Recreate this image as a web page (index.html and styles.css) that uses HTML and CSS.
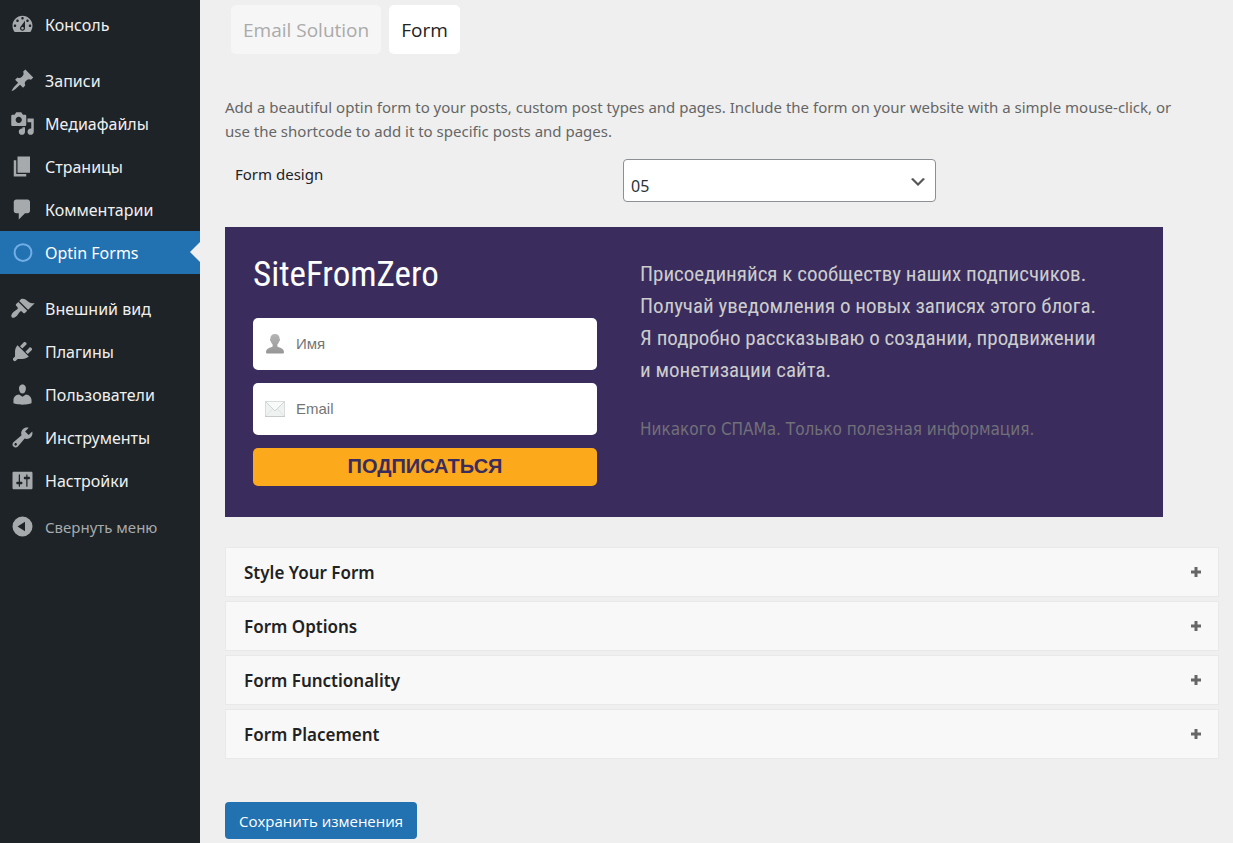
FILE: index.html
```html
<!DOCTYPE html>
<html lang="ru">
<head>
    <meta charset="UTF-8">
    <meta name="viewport" content="width=device-width, initial-scale=1.0">
    <title>Optin Forms</title>

    <link rel="stylesheet" href="styles.css">
</head>
<body>

    <div class="wrapper">
        <!-- Admin menu -->
        <nav class="admin-menu">
            <ul>
                <li><a href="#"><svg class="icon" viewBox="0 0 20 20"><path d="M3.76 16h12.48c1.1-1.37 1.76-3.11 1.76-5 0-4.42-3.58-8-8-8s-8 3.58-8 8c0 1.89.66 3.63 1.76 5zM10 4c.55 0 1 .45 1 1s-.45 1-1 1-1-.45-1-1 .45-1 1-1zM6 6c.55 0 1 .45 1 1s-.45 1-1 1-1-.45-1-1 .45-1 1-1zm8 0c.55 0 1 .45 1 1s-.45 1-1 1-1-.45-1-1 .45-1 1-1zm-5.37 5.55L12 7v6c0 1.1-.9 2-2 2s-2-.9-2-2c0-.57.24-1.08.63-1.45zM4 10c.55 0 1 .45 1 1s-.45 1-1 1-1-.45-1-1 .45-1 1-1zm12 0c.55 0 1 .45 1 1s-.45 1-1 1-1-.45-1-1 .45-1 1-1zm-5 3c0-.55-.45-1-1-1s-1 .45-1 1 .45 1 1 1 1-.45 1-1z"/></svg>Консоль</a></li>
                <li class="separator"></li>
                <li><a href="#"><svg class="icon" viewBox="0 0 20 20"><path d="M10.44 3.02l1.82-1.82 6.36 6.35-1.83 1.82c-1.05-.68-2.48-.57-3.41.36l-.75.75c-.92.93-1.04 2.35-.35 3.41l-1.83 1.82-2.41-2.41-2.8 2.79c-.42.42-3.38 2.71-3.8 2.29s1.86-3.39 2.28-3.81l2.79-2.79L4.1 9.36l1.83-1.82c1.05.69 2.48.57 3.4-.36l.75-.75c.93-.92 1.05-2.35.36-3.41z"/></svg>Записи</a></li>
                <li><a href="#"><svg class="icon" viewBox="0 0 20 20"><path d="M13 11V4c0-.55-.45-1-1-1h-1.67L9 1H5L3.67 3H2c-.55 0-1 .45-1 1v7c0 .55.45 1 1 1h10c.55 0 1-.45 1-1zM7 4.5c1.38 0 2.5 1.12 2.5 2.5S8.38 9.5 7 9.5 4.5 8.38 4.5 7 5.62 4.5 7 4.5zM14 6h5v10.5c0 1.38-1.12 2.5-2.5 2.5S14 17.88 14 16.5s1.12-2.5 2.5-2.5c.17 0 .34.02.5.05V9h-3V6zm-4 8.05V13h2v3.5c0 1.38-1.12 2.5-2.5 2.5S7 17.88 7 16.5 8.12 14 9.5 14c.17 0 .34.02.5.05z"/></svg>Медиафайлы</a></li>
                <li><a href="#"><svg class="icon" viewBox="0 0 20 20"><path d="M6 15V2h10v13H6zm-1 1h8v2H3V5h2v11z"/></svg>Страницы</a></li>
                <li><a href="#"><svg class="icon" viewBox="0 0 20 20"><path d="M5 2h9c1.1 0 2 .9 2 2v7c0 1.1-.9 2-2 2h-2l-5 5v-5H5c-1.1 0-2-.9-2-2V4c0-1.1.9-2 2-2z"/></svg>Комментарии</a></li>
                <li><a href="#" class="current"><svg class="icon" viewBox="0 0 20 20"><circle cx="10.400" cy="10" r="6.700" fill="none" stroke="currentColor" stroke-width="1.600"/></svg>Optin Forms</a></li>
                <li class="separator"></li>
                <li><a href="#"><svg class="icon" viewBox="0 0 20 20"><path d="M14.48 11.06L7.41 3.99l1.5-1.5c.5-.56 2.3-.47 3.51.32 1.21.8 1.43 1.28 2.91 2.1 1.18.64 2.45 1.26 4.45.85zm-.71.71L6.7 4.7 4.93 6.47c-.39.39-.39 1.02 0 1.41l1.06 1.06c.39.39.39 1.03 0 1.42-.6.6-1.43 1.11-2.21 1.69-.35.26-.7.53-1.01.84C1.43 14.23.4 16.08 1.4 17.07c.99 1 2.84-.03 4.18-1.36.31-.31.58-.66.85-1.02.57-.78 1.08-1.61 1.69-2.21.39-.39 1.02-.39 1.41 0l1.06 1.06c.39.39 1.02.39 1.41 0z"/></svg>Внешний вид</a></li>
                <li><a href="#"><svg class="icon" viewBox="0 0 20 20"><path d="M13.11 4.36L9.87 7.6 8 5.73l3.24-3.24c.35-.34 1.05-.2 1.56.32.52.51.66 1.21.31 1.55zm-8 1.77l.91-1.12 9.01 9.01-1.19.84c-.71.71-2.63 1.16-3.82 1.16H6.14L4.9 17.26c-.59.59-1.54.59-2.12 0-.59-.58-.59-1.53 0-2.12l1.24-1.24v-3.88c0-1.13.4-3.19 1.09-3.89zm7.26 3.97l3.24-3.24c.34-.35 1.04-.21 1.55.31.52.51.66 1.21.31 1.55l-3.24 3.25z"/></svg>Плагины</a></li>
                <li><a href="#"><svg class="icon" viewBox="0 0 20 20"><path d="M10 9.25c-2.27 0-2.73-3.44-2.73-3.44C7 4.02 7.82 2 9.97 2c2.16 0 2.98 2.02 2.71 3.81 0 0-.41 3.44-2.68 3.44zm0 2.57L12.72 10c2.39 0 4.52 2.33 4.52 4.53v2.49s-3.65 1.13-7.24 1.13c-3.65 0-7.24-1.13-7.24-1.13v-2.49c0-2.25 1.94-4.48 4.47-4.48z"/></svg>Пользователи</a></li>
                <li><a href="#"><svg class="icon" viewBox="0 0 20 20"><path d="M16.68 9.77c-1.34 1.34-3.3 1.67-4.95.99l-5.41 6.52c-.99.99-2.59.99-3.58 0s-.99-2.59 0-3.57l6.52-5.42c-.68-1.65-.35-3.61.99-4.95 1.28-1.28 3.12-1.62 4.72-1.06l-2.89 2.89 2.82 2.82 2.86-2.87c.53 1.58.18 3.39-1.08 4.65zM3.81 16.21c.4.39 1.04.39 1.43 0 .4-.4.4-1.04 0-1.43-.39-.4-1.03-.4-1.43 0-.39.39-.39 1.03 0 1.43z"/></svg>Инструменты</a></li>
                <li><a href="#"><svg class="icon" viewBox="0 0 20 20"><path d="M18 16V4c0-.55-.45-1-1-1H3c-.55 0-1 .45-1 1v12c0 .55.45 1 1 1h14c.55 0 1-.45 1-1zM8 11h1c.55 0 1 .45 1 1s-.45 1-1 1H8v1.5c0 .28-.22.5-.5.5s-.5-.22-.5-.5V13H6c-.55 0-1-.45-1-1s.45-1 1-1h1V5.5c0-.28.22-.5.5-.5s.5.22.5.5V11zm5-2h-1c-.55 0-1-.45-1-1s.45-1 1-1h1V5.5c0-.28.22-.5.5-.5s.5.22.5.5V7h1c.55 0 1 .45 1 1s-.45 1-1 1h-1v5.5c0 .28-.22.5-.5.5s-.5-.22-.5-.5V9z"/></svg>Настройки</a></li>
            </ul>
            <button type="button" class="collapse"><svg class="icon" viewBox="0 0 20 20"><path fill-rule="evenodd" d="M10 2a8 8 0 1 1 0 16 8 8 0 0 1 0-16zm2 4.2L6 10l6 3.8z"/></svg>Свернуть меню</button>
        </nav>

        <!-- Settings page -->
        <main class="content">
            <div class="tabs">
                <a href="#" class="tab">Email Solution</a>
                <a href="#" class="tab active">Form</a>
            </div>

            <p class="intro">Add a beautiful optin form to your posts, custom post types and pages. Include the form on your website with a simple mouse-click, or use the shortcode to add it to specific posts and pages.</p>

            <div class="design">
                <label for="form-design">Form design</label>
                <div class="select">
                    <select id="form-design">
                        <option>01</option>
                        <option>02</option>
                        <option>03</option>
                        <option>04</option>
                        <option selected>05</option>
                    </select>
                    <svg class="chevron" viewBox="0 0 20 20"><path d="M5 6l5 5 5-5 2 1-7 7-7-7z"/></svg>
                </div>
            </div>

            <!-- Form preview -->
            <section class="preview">
                <form class="optin">
                    <h2>SiteFromZero</h2>
                    <div class="field">
                        <svg viewBox="0 0 20 20">
                            <defs>
                                <linearGradient id="person" x1="0" y1="0" x2="0" y2="1">
                                    <stop offset="0" stop-color="#b4b4b4"/>
                                    <stop offset="1" stop-color="#969696"/>
                                </linearGradient>
                            </defs>
                            <path fill="url(#person)" d="M10 0c2.900 0 4.600 2 4.600 4.600 0 .5.400.7.400 1.500s-.4 1.200-.9 1.500c-.4 1.500-1 2.400-1.800 3.100v1.500c1 1.500 6.700 1.500 6.700 5.800 0 1-.6 1.500-1.500 1.500h-15C1.600 19.500 1 19 1 18c0-4.300 5.700-4.300 6.700-5.800v-1.500c-.8-.7-1.400-1.600-1.800-3.100-.5-.3-.9-.7-.9-1.500s.4-1 .4-1.500C5.400 2 7.100 0 10 0z"/>
                        </svg>
                        <input type="text" placeholder="Имя" aria-label="Имя">
                    </div>
                    <div class="field">
                        <svg viewBox="0 0 20 20">
                            <rect x=".5" y="2.500" width="19" height="15" fill="#eef2f1" stroke="#d8dddb"/>
                            <path d="M1 17l6.500-7M19 17l-6.500-7" fill="none" stroke="#dfe5e3"/>
                            <path d="M1 3l9 9 9-9" fill="#f8faf9" stroke="#cdd4d1"/>
                            <path d="M0 17.500h20" stroke="#c6cbc9"/>
                        </svg>
                        <input type="email" placeholder="Email" aria-label="Email">
                    </div>
                    <button type="button">ПОДПИСАТЬСЯ</button>
                </form>
                <div class="about">
                    <p>Присоединяйся к сообществу наших подписчиков.<br>Получай уведомления о новых записях этого блога.<br>Я подробно рассказываю о создании, продвижении<br>и монетизации сайта.</p>
                    <p class="note">Никакого СПАМа. Только полезная информация.</p>
                </div>
            </section>

            <div class="accordion">
                <button type="button">Style Your Form <svg viewBox="0 0 10 10"><path d="M5 0v10M0 5h10"/></svg></button>
                <button type="button">Form Options <svg viewBox="0 0 10 10"><path d="M5 0v10M0 5h10"/></svg></button>
                <button type="button">Form Functionality <svg viewBox="0 0 10 10"><path d="M5 0v10M0 5h10"/></svg></button>
                <button type="button">Form Placement <svg viewBox="0 0 10 10"><path d="M5 0v10M0 5h10"/></svg></button>
            </div>

            <button type="submit" class="save">Сохранить изменения</button>
        </main>
    </div>

</body>
</html>
```
FILE: styles.css
```css
* {
    box-sizing: border-box;
}
body {
    margin: 0;
    background: #efefef;
    font-family: "Noto Sans", "Open Sans", sans-serif;
    font-size: 15px;
    color: #1d2327;
}
button, input, select {
    font-family: inherit;
    margin: 0;
}
.wrapper {
    display: flex;
    min-height: 100vh;
}

/* admin menu */
.admin-menu {
    flex: 0 0 200px;
    padding-top: 3px;
    background: #1d2327;
}
.admin-menu ul {
    list-style: none;
    margin: 0;
    padding: 0;
}
.admin-menu a, .collapse {
    display: flex;
    align-items: center;
    gap: 10px;
    width: 100%;
    height: 43px;
    padding: 0 10px;
    color: #f0f0f1;
    font-size: 16px;
    text-decoration: none;
}
.admin-menu .separator {
    height: 13px;
}
.admin-menu .icon {
    width: 25px;
    height: 25px;
    fill: #a7aaad;
}
.admin-menu .current {
    position: relative;
    background: #2271b1;
    color: #fff;
}
.admin-menu .current .icon {
    color: #72aee6;
}
.admin-menu .current::after {
    content: "";
    position: absolute;
    right: 0;
    top: 11px;
    border: 10px solid transparent;
    border-right-color: #efefef;
    border-left: 0;
}
.admin-menu .collapse {
    margin-top: 3px;
    border: 0;
    background: none;
    color: #a7aaad;
    font-size: 15px;
}

/* content */
.content {
    flex: 1;
    min-width: 0;
    padding: 5px 14px 4px 25px;
}
.tabs {
    display: flex;
    gap: 8px;
    padding-left: 6px;
}
.tab {
    padding: 2px 12px 0;
    border-radius: 5px;
    background: #f6f6f6;
    color: #aaa;
    font-family: "Open Sans", sans-serif;
    font-size: 19px;
    line-height: 47px;
    text-decoration: none;
}
.tab.active {
    background: #fff;
    color: #222;
}
.intro {
    max-width: 970px;
    margin: 41px 0 16px;
    color: #666;
    line-height: 24px;
}
.design {
    display: flex;
    padding-left: 10px;
}
.design label {
    flex: 0 0 388px;
    line-height: 30px;
}
.select {
    position: relative;
    flex: 0 1 313px;
}
.select select {
    width: 100%;
    height: 43px;
    padding: 10px 30px 0 7px;
    border: 1px solid #8c8f94;
    border-radius: 4px;
    background: #fff;
    color: #2c3338;
    font-size: 16px;
    appearance: none;
}
.chevron {
    position: absolute;
    right: 8px;
    top: 13px;
    width: 20px;
    height: 20px;
    fill: #555;
    pointer-events: none;
}

/* form preview */
.preview {
    display: flex;
    gap: 43px;
    max-width: 938px;
    margin-top: 25px;
    padding: 28px 28px 31px;
    background: #3a2d5e;
}
.optin {
    flex: 0 0 344px;
    display: flex;
    flex-direction: column;
    gap: 13px;
}
.optin h2 {
    margin: 0 0 10px;
    color: #fff;
    font-family: "Roboto Condensed", "Liberation Sans Narrow", Roboto, sans-serif;
    font-size: 35px;
    font-weight: 400;
    line-height: 40px;
}
.field {
    display: flex;
    align-items: center;
    gap: 11px;
    height: 52px;
    padding: 0 12px;
    border-radius: 5px;
    background: #fff;
}
.field svg {
    width: 20px;
    height: 20px;
}
.field input {
    flex: 1;
    min-width: 0;
    padding: 0 0 2px;
    border: 0;
    background: none;
    color: #444;
    font-family: "Liberation Sans", Arial, sans-serif;
    font-size: 15px;
}
.field input::placeholder {
    color: #757575;
}
.optin button {
    height: 38px;
    padding: 0 0 2px;
    border: 0;
    border-radius: 5px;
    background: #fda91c;
    color: #3a2d5e;
    font-family: "Liberation Sans", Arial, sans-serif;
    font-size: 20px;
    font-weight: 700;
}
.about {
    flex: 1;
    font-family: "Roboto Condensed", "Liberation Sans Narrow", Roboto, sans-serif;
    font-size: 21px;
    line-height: 32px;
    color: #ccc;
}
.about p {
    margin: 3px 0 27px;
}
.about .note {
    margin: 0;
    color: #727078;
    font-family: Tahoma, "DejaVu Sans Condensed", "Liberation Sans", sans-serif;
    font-size: 17px;
}

/* accordion */
.accordion {
    display: flex;
    flex-direction: column;
    gap: 4px;
    margin-top: 30px;
}
.accordion button {
    display: flex;
    align-items: center;
    justify-content: space-between;
    height: 50px;
    padding: 0 17px 0 18px;
    border: 1px solid #e9e9e9;
    background: #f8f8f8;
    color: #222;
    font-size: 17px;
    font-weight: 600;
}
.accordion svg {
    width: 10px;
    height: 10px;
    fill: none;
    stroke: #666;
    stroke-width: 3;
}
.save {
    height: 37px;
    margin-top: 43px;
    padding: 0 14px;
    border: 0;
    border-radius: 4px;
    background: #2271b1;
    color: #fff;
    font-family: "Open Sans", sans-serif;
    font-size: 15px;
}
```
